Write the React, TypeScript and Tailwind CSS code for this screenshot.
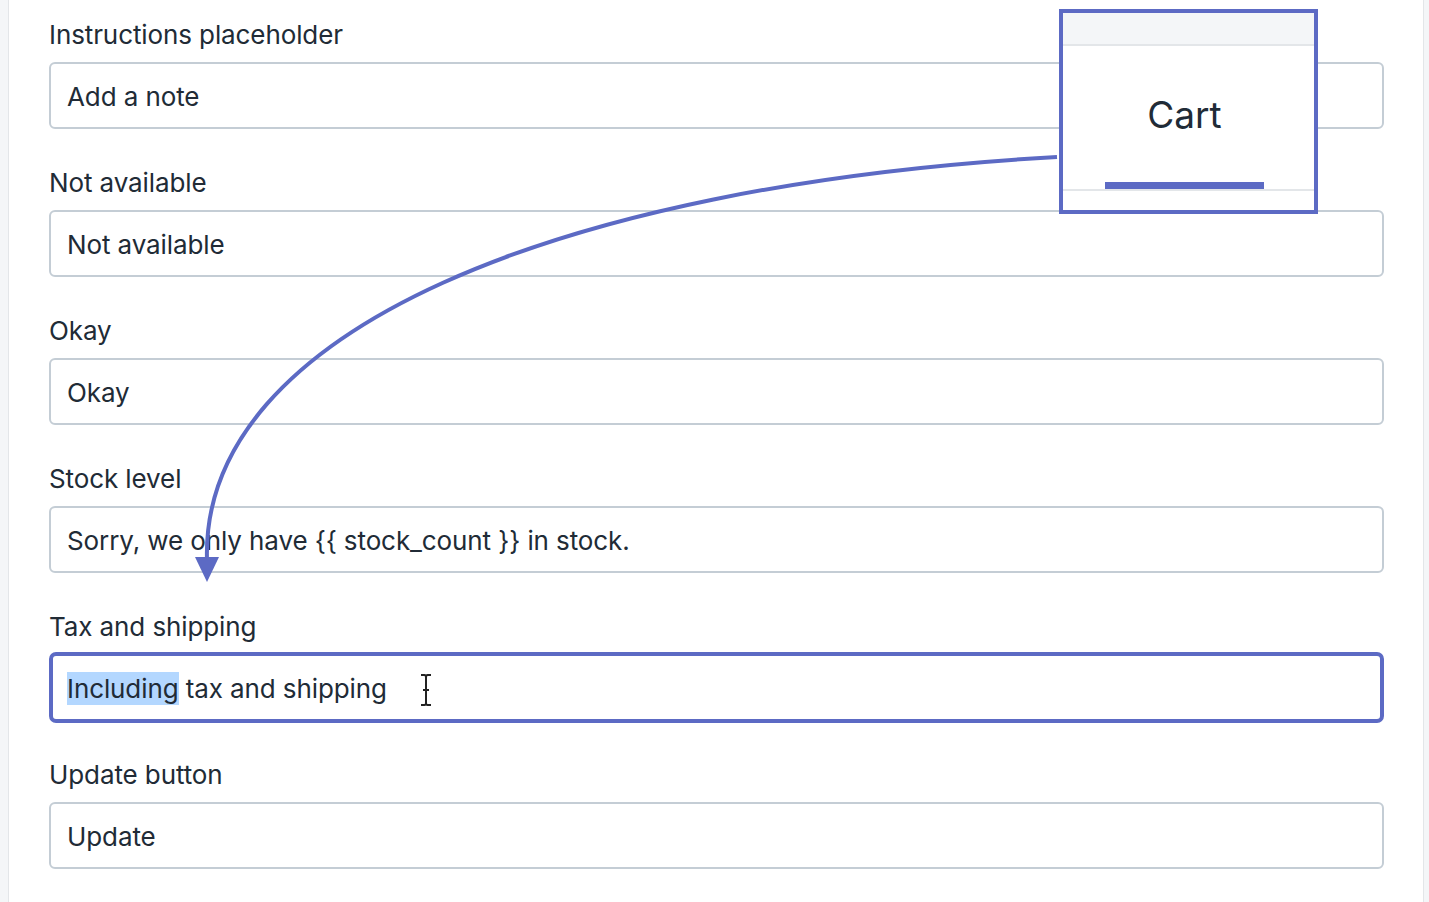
import React from "react";

const fields = [
  { label: "Instructions placeholder", value: "Add a note" },
  { label: "Not available", value: "Not available" },
  { label: "Okay", value: "Okay" },
  { label: "Stock level", value: "Sorry, we only have {{ stock_count }} in stock." },
  { label: "Tax and shipping", value: "tax and shipping", focused: true },
  { label: "Update button", value: "Update" },
];

export default function App() {
  return (
    <div
      className="relative w-[1429px] h-[902px] overflow-hidden bg-[#f4f6f8] flex text-[#212b36]"
      style={{ fontFamily: "Inter, 'Noto Sans', sans-serif" }}
    >
      <div className="w-[8px] shrink-0" />
      <div className="w-[1416px] shrink-0 bg-white border-l border-r border-[#e3e6e9] pl-[40px] pr-[39px] pt-[18px]">
        {fields.map((f) => (
          <div key={f.label} className="mb-[37px]">
            <div className="text-[26px] leading-[32px] pt-[1px] mb-[11px] tracking-[-0.1px]">{f.label}</div>
            {f.focused ? (
              <div className="h-[67px] flex flex-col">
                <div className="-mt-[2px] h-[71px] shrink-0 rounded-[7px] border-[4px] border-[#5c6ac4] flex items-center pl-[14px] pt-[2px] text-[26px] tracking-[-0.1px]">
                  <span className="bg-[#b3d7ff] leading-[33px]">Including</span>
                  <span className="whitespace-pre"> {f.value}</span>
                  <svg width="14" height="34" viewBox="0 0 14 34" className="ml-[32px] mt-[2px]">
                    <path d="M2 2 H5.5 Q7 2 7 4.5 V29.5 Q7 32 5.5 32 H2 M12 2 H8.5 Q7 2 7 4.5 M7 29.5 Q7 32 8.5 32 H12 M4 17 H10" stroke="#222" strokeWidth="2" fill="none" />
                  </svg>
                </div>
              </div>
            ) : (
              <div className="h-[67px] rounded-[6px] border-2 border-[#c4cdd5] flex items-center pl-[16px] pt-[2px] text-[26px] tracking-[-0.1px]">
                {f.value}
              </div>
            )}
          </div>
        ))}
      </div>
      <div className="flex-1" />

      {/* Cart callout */}
      <div className="absolute left-[1059px] top-[9px] w-[259px] h-[205px] border-[4px] border-[#5c6ac4] bg-white flex flex-col">
        <div className="h-[33px] bg-[#f4f6f8] border-b-2 border-[#e3e6e9]" />
        <div className="flex-1 flex items-center justify-center text-[37px] pr-[8px] pt-[2px]">Cart</div>
        <div className="flex justify-center pr-[8px]">
          <div className="w-[159px] h-[7px] bg-[#5c6ac4]" />
        </div>
        <div className="h-[2px] bg-[#e3e6e9]" />
        <div className="h-[19px]" />
      </div>

      {/* Arrow */}
      <svg className="absolute left-0 top-0 pointer-events-none" width="1429" height="902">
        <path d="M1057 157 C 560 185, 200 330, 207 560" stroke="#5c6ac4" strokeWidth="4" fill="none" />
        <polygon points="195,557 219,557 207,582" fill="#5c6ac4" />
      </svg>
    </div>
  );
}
